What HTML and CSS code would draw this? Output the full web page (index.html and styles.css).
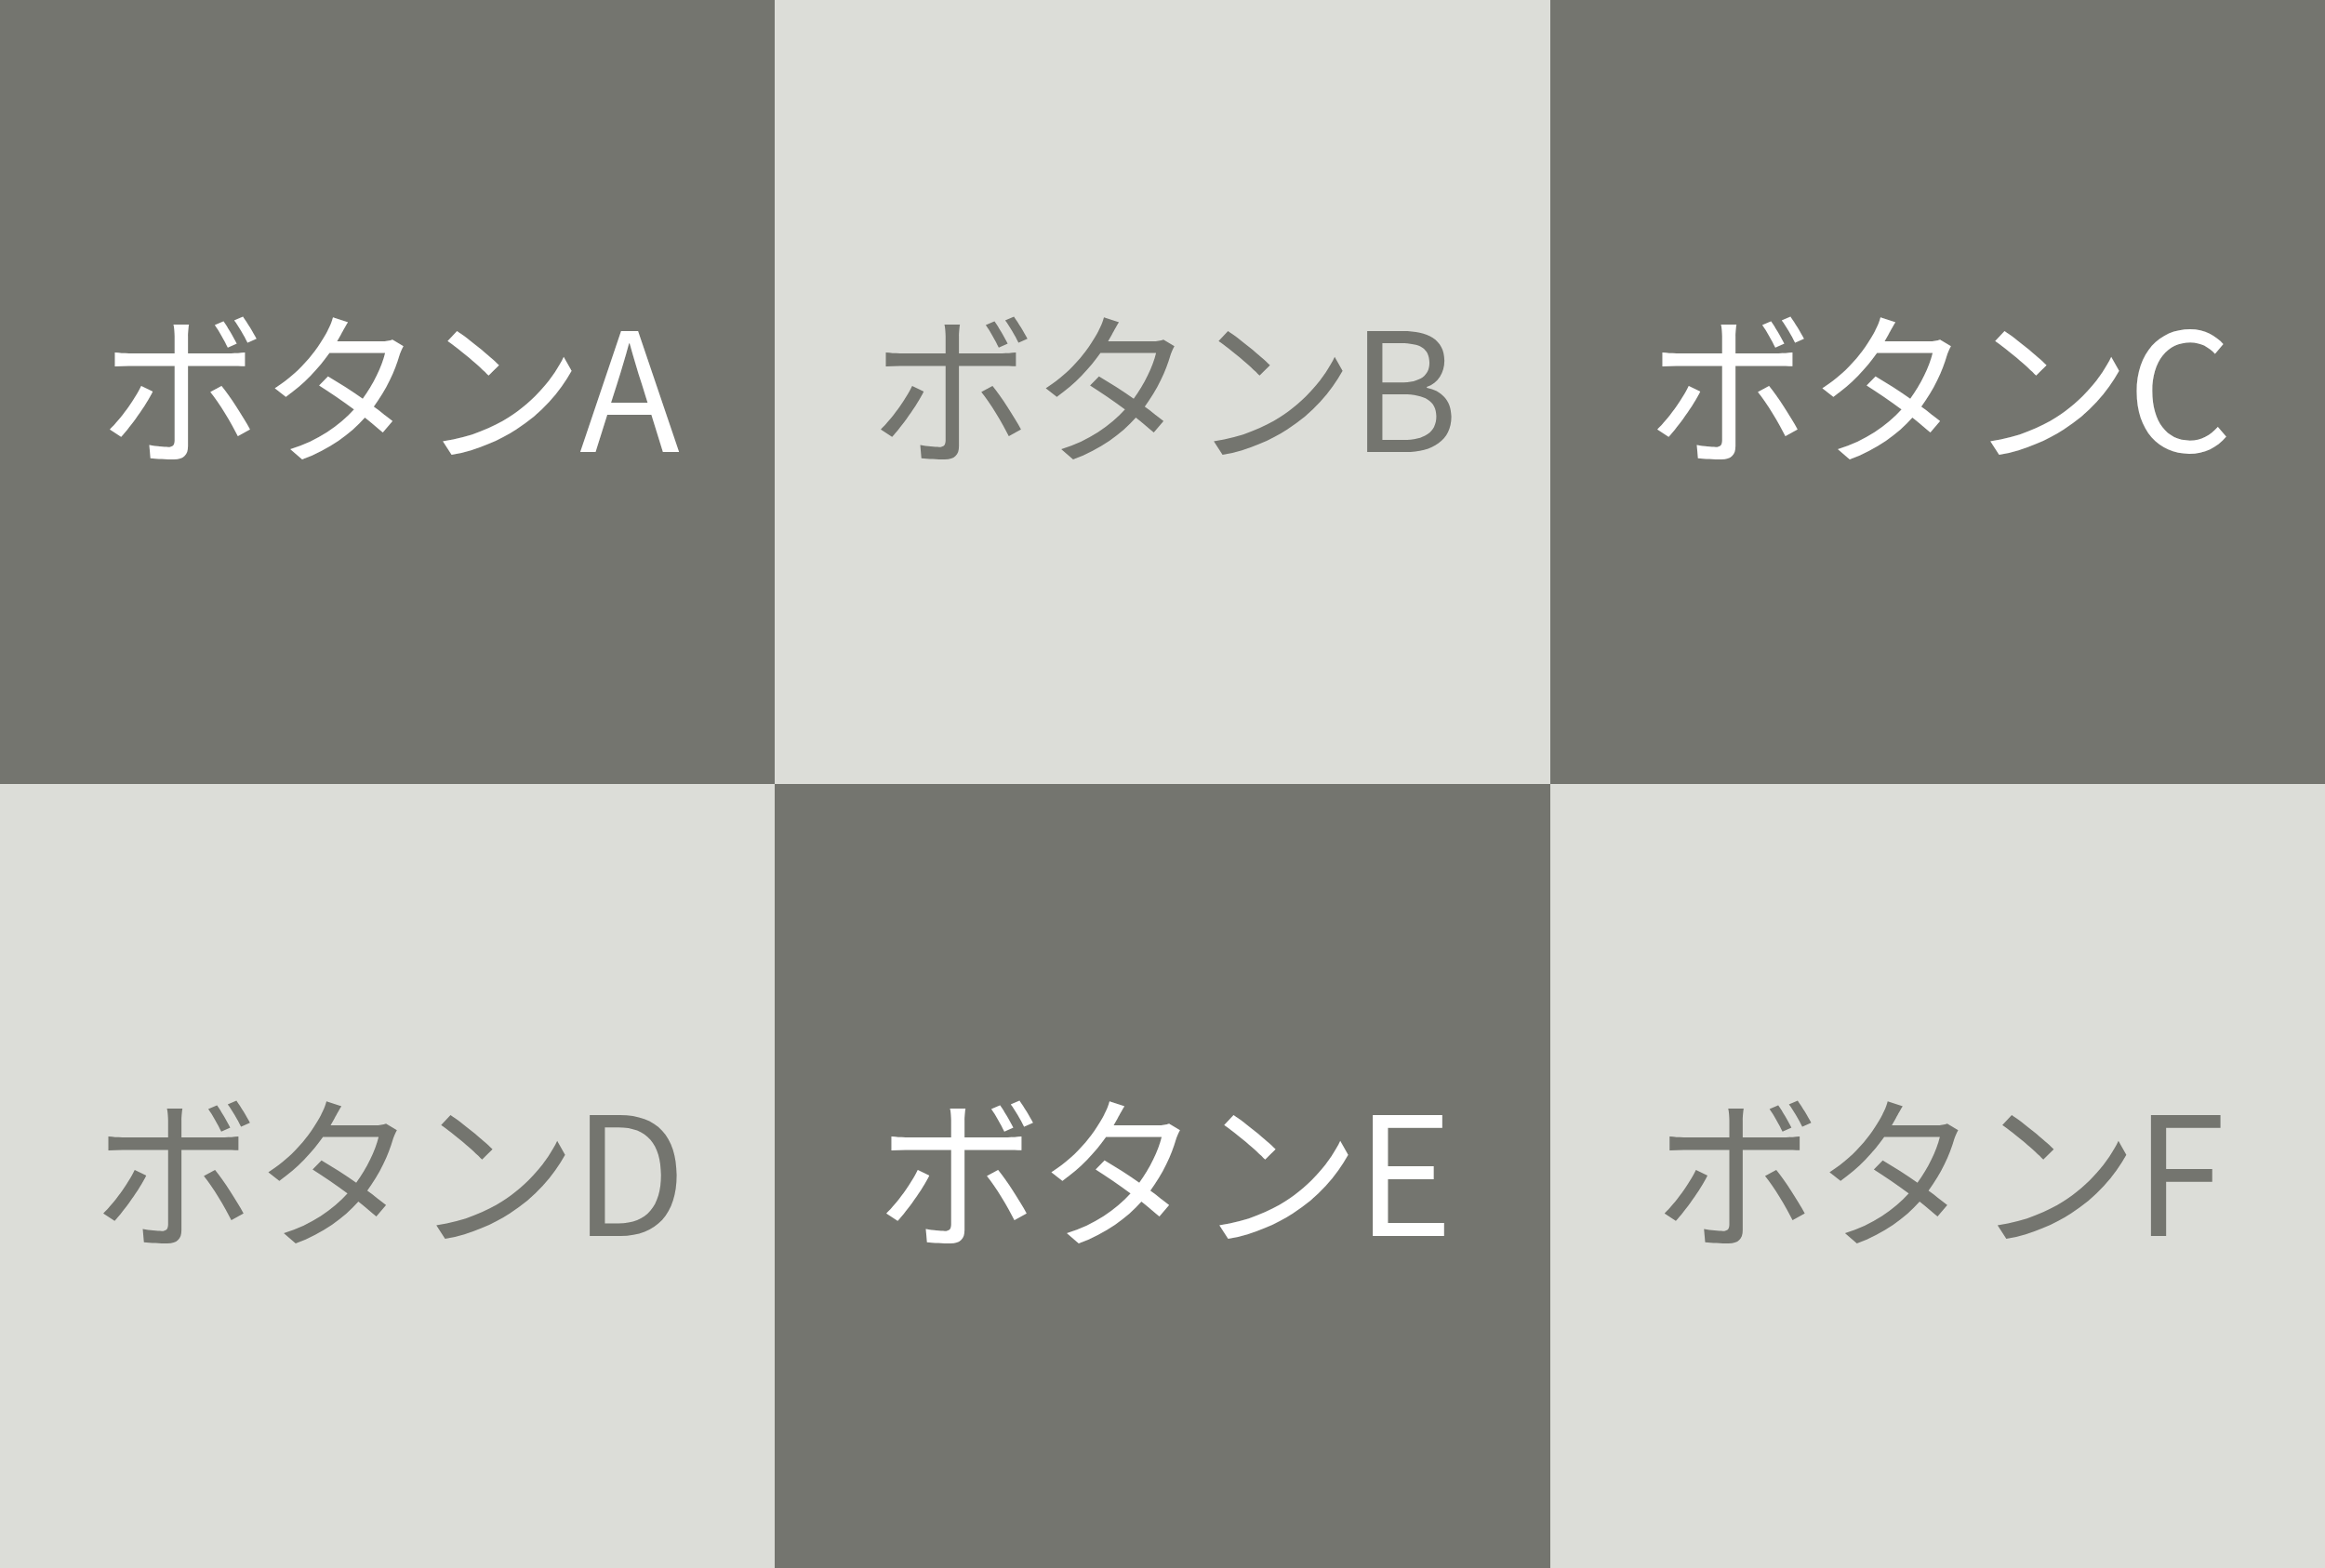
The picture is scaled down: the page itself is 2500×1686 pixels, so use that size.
FILE: index.html
```html
<!DOCTYPE html>
<html lang="ja">
<head>
<meta charset="utf-8">
<title>ボタン</title>
<link rel="stylesheet" href="styles.css">
</head>
<body>
<div class="grid">
  <button class="cell dark">ボタンA</button>
  <button class="cell light">ボタンB</button>
  <button class="cell dark">ボタンC</button>
  <button class="cell light">ボタンD</button>
  <button class="cell dark">ボタンE</button>
  <button class="cell light">ボタンF</button>
</div>
</body>
</html>
```
FILE: styles.css
```css
html, body {
  margin: 0;
  padding: 0;
  width: 100%;
  height: 100%;
  overflow: hidden;
}
.grid {
  display: grid;
  grid-template-columns: repeat(3, 1fr);
  grid-template-rows: repeat(2, 1fr);
  width: 100vw;
  height: 100vh;
}
.cell {
  display: flex;
  align-items: center;
  justify-content: center;
  margin: 0;
  padding: 0 0 24px 0;
  border: none;
  font-family: "Noto Sans CJK JP", "Noto Sans", sans-serif;
  font-size: 177px;
  font-weight: 400;
  letter-spacing: -5px;
  line-height: 1;
  cursor: pointer;
}
.dark {
  background: #74756f;
  color: #ffffff;
}
.light {
  background: #dcddd8;
  color: #74756f;
}
```
